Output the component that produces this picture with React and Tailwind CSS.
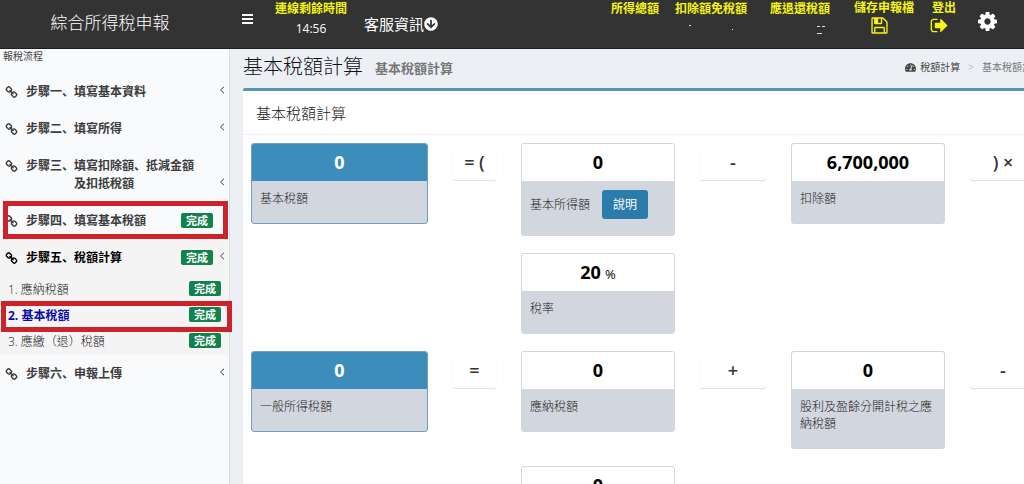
import React from "react";
import { FaArrowCircleDown, FaTachometerAlt } from "react-icons/fa";

function Glyph({ d, box = "0 0 1792 1792", className }) {
  return (
    <svg viewBox={box} className={className} fill="currentColor" aria-hidden="true">
      <path d={d} />
    </svg>
  );
}

const LINK =
  "M1520 1216q0-40-28-68l-208-208q-28-28-68-28-42 0-72 32 3 3 19 18.500t21.500 21.500 15 19 13 25.500 3.500 27.500q0 40-28 68t-68 28q-15 0-27.500-3.500t-25.500-13-19-15-21.500-21.500-18.500-19q-33 31-33 73 0 40 28 68l206 207q27 27 68 27 40 0 68-26l147-146q28-28 28-67zm-703-705q0-40-28-68l-206-207q-28-28-68-28-39 0-68 27l-147 146q-28 28-28 67 0 40 28 68l208 208q27 27 68 27 42 0 72-31-3-3-19-18.500t-21.500-21.500-15-19-13-25.500-3.500-27.500q0-40 28-68t68-28q15 0 27.500 3.500t25.500 13 19 15 21.500 21.500 18.500 19q33-31 33-73zm895 705q0 120-85 203l-147 146q-83 83-203 83-121 0-204-85l-206-207q-83-83-83-203 0-123 88-209l-88-88q-86 88-208 88-120 0-204-84l-208-208q-84-84-84-204t85-203l147-146q83-83 203-83 121 0 204 85l206 207q83 83 83 203 0 123-88 209l88 88q86-88 208-88 120 0 204 84l208 208q84 84 84 204z";
const SAVE =
  "M512 1536h768v-384h-768v384zm896 0h128v-896q0-14-10-38.500t-20-34.500l-281-281q-10-10-34-20t-39-10v416q0 40-28 68t-68 28h-576q-40 0-68-28t-28-68v-416h-128v1280h128v-416q0-40 28-68t68-28h832q40 0 68 28t28 68v416zm-384-928v-320q0-13-9.500-22.500t-22.500-9.500h-192q-13 0-22.500 9.500t-9.500 22.500v320q0 13 9.500 22.500t22.500 9.500h192q13 0 22.500-9.500t9.500-22.500zm640 32v928q0 40-28 68t-68 28h-1344q-40 0-68-28t-28-68v-1344q0-40 28-68t68-28h928q40 0 88 20t76 48l280 280q28 28 48 76t20 88z";
const SIGN_OUT =
  "M704 1440q0 4 1 20t.5 26.500-3 23.500-10 19.500-20.500 6.500h-320q-119 0-203.500-84.500t-84.500-203.500v-704q0-119 84.500-203.500t203.500-84.500h320q13 0 22.500 9.500t9.500 22.500q0 4 1 20t.5 26.500-3 23.500-10 19.500-20.500 6.500h-320q-66 0-113 47t-47 113v704q0 66 47 113t113 47h312l11.500 1 11.500 3 8 5.500 7 9 2 13.500zm928-544q0 26-19 45l-544 544q-19 19-45 19t-45-19-19-45v-288h-448q-26 0-45-19t-19-45v-384q0-26 19-45t45-19h448v-288q0-26 19-45t45-19 45 19l544 544q19 19 19 45z";
const COG =
  "M1024 896q0-106-75-181t-181-75-181 75-75 181 75 181 181 75 181-75 75-181zm512-109v222q0 12-8 23t-20 13l-185 28q-19 54-39 91 35 50 107 138 10 12 10 25t-9 23q-27 37-99 108t-94 71q-12 0-26-9l-138-108q-44 23-91 38-16 136-29 186-7 28-36 28h-222q-14 0-24.500-8.500t-11.500-21.500l-28-184q-49-16-90-37l-141 107q-10 9-25 9-14 0-25-11-126-114-165-168-7-10-7-23 0-12 8-23 15-21 51-66.500t54-70.500q-27-50-41-99l-183-27q-13-2-21-12.500t-8-23.500v-222q0-12 8-23t19-13l186-28q14-46 39-92-40-57-107-138-10-12-10-24 0-10 9-23 26-36 98.500-107.500t94.500-71.500q13 0 26 10l138 107q44-23 91-38 16-136 29-186 7-28 36-28h222q14 0 24.500 8.500t11.500 21.500l28 184q49 16 90 37l142-107q9-9 24-9 13 0 25 10 129 119 165 170 7 8 7 22 0 12-8 23-15 21-51 66.500t-54 70.500q26 50 41 98l183 28q13 2 21 12.500t8 23.500z";

function Stat({ label, marks }) {
  return (
    <div className="flex flex-col">
      <span>{label}</span>
      <svg viewBox="0 0 60 20" className="h-5 w-[60px]" fill="#e5e5e5" aria-hidden="true">
        {marks.map(([x, y, w]) => (
          <rect key={x + "-" + y} x={x} y={y} width={w} height="1" />
        ))}
      </svg>
    </div>
  );
}

function Header() {
  return (
    <header className="flex h-[49px] shrink-0 border-b border-[#1e1e1e] bg-[#333333] text-white">
      <div className="flex w-[220px] shrink-0 items-center justify-center pb-[2px] text-[17px] font-light">
        綜合所得稅申報
      </div>
      <button type="button" aria-label="選單" className="ml-[22px] mt-[13px] h-[11px] w-[11px]">
        <svg viewBox="0 0 11 11" className="size-[11px]" fill="currentColor" aria-hidden="true">
          <path d="M0 1h11v2H0zM0 5h11v2H0zM0 9h11v2H0z" />
        </svg>
      </button>
      <div className="ml-[22px] flex flex-col items-center text-xs whitespace-nowrap">
        <span className="h-[18px] leading-[18px] font-bold text-[#f5f510]">連線剩餘時間</span>
        <span className="leading-[22px] font-medium">14:56</span>
      </div>
      <button type="button" className="ml-[17px] flex h-12 items-center text-[15px] whitespace-nowrap">
        客服資訊
        <FaArrowCircleDown className="size-[14px]" />
      </button>
      <div className="ml-auto flex pr-[27px] text-xs leading-[18px] font-bold whitespace-nowrap text-[#f5f510]">
        <Stat label="所得總額" marks={[]} />
        <div className="ml-1 flex gap-[23px]">
          <Stat label="扣除額免稅額" marks={[[14, 7, 2], [57, 11, 1]]} />
          <Stat label="應退還稅額" marks={[[47, 8, 3], [52, 8, 3], [47, 15, 5]]} />
        </div>
        <button type="button" className="ml-6 flex flex-col items-start">
          <span className="leading-4">儲存申報檔</span>
          <Glyph d={SAVE} className="ml-4 size-[19px]" />
        </button>
        <button type="button" className="ml-4 flex flex-col items-start">
          <span className="pl-[2px] leading-4">登出</span>
          <Glyph d={SIGN_OUT} className="size-[19px]" />
        </button>
        <button type="button" aria-label="設定" className="ml-[22px] flex h-[42px] items-center text-white">
          <Glyph d={COG} box="0 128 1536 1536" className="size-[19px]" />
        </button>
      </div>
    </header>
  );
}

function Done() {
  return (
    <span className="rounded-[2px] bg-[#12824c] px-[5px] text-[11px] leading-[15px] font-bold text-white">
      完成
    </span>
  );
}

function Chevron() {
  return (
    <svg viewBox="0 0 6 8" className="h-2 w-[6px]" fill="none" stroke="#444" aria-hidden="true">
      <path d="M5 .8 1.500 4 5 7.200" />
    </svg>
  );
}

/* Enumeration comma set low and to the left in its cell. */
function Comma() {
  return <span className="font-['Noto_Sans_CJK_JP',sans-serif] leading-none">、</span>;
}

function Step({ children, done, arrow, active, highlight }) {
  return (
    <a
      href="#"
      className={
        "relative flex items-start pt-[10px] pr-1 pb-[9px] pl-[5px] text-xs leading-[18px] font-bold " +
        (active ? "bg-[#f4f4f5] text-black" : "text-[#3c3c3c]")
      }
    >
      <Glyph d={LINK} className="mt-[3px] mr-2 size-[13px] shrink-0" />
      <span>{children}</span>
      <span className="ml-auto flex items-end self-stretch">
        {done && (
          <span className={"flex h-[18px] items-center pb-[2px] " + (arrow ? "mr-[6px]" : "mr-3")}>
            <Done />
          </span>
        )}
        {arrow && (
          <span className="flex h-[18px] items-center pb-1">
            <Chevron />
          </span>
        )}
      </span>
      {highlight && (
        <span className="pointer-events-none absolute -top-px right-px bottom-0 left-[3px] z-10 border-[5px] border-[#cc2229]" />
      )}
    </a>
  );
}

function SubStep({ label, current }) {
  return (
    <a
      href="#"
      className={
        "relative flex h-[26px] items-center pr-2 pl-2 text-xs " +
        (current ? "font-bold text-[#0a0aa5]" : "font-light text-[#222]")
      }
    >
      {label}
      <span className="ml-auto flex h-6 items-center pb-1">
        <Done />
      </span>
      {current && (
        <span className="pointer-events-none absolute -top-[2px] -right-[3px] -bottom-[3px] left-px z-10 border-[5px] border-[#cc2229]" />
      )}
    </a>
  );
}

function Sidebar() {
  return (
    <nav className="relative z-10 w-[230px] shrink-0 border-r border-[#d8dce4] bg-[#f9fafc]">
      <div className="h-6 pl-[3px] text-[10px] leading-[14px] text-[#444]">報稅流程</div>
      <Step arrow>步驟一<Comma />填寫基本資料</Step>
      <Step arrow>步驟二<Comma />填寫所得</Step>
      <Step arrow>
        步驟三<Comma />填寫扣除額<Comma />抵減金額
        <span className="block pl-12">及扣抵稅額</span>
      </Step>
      <Step done highlight>步驟四<Comma />填寫基本稅額</Step>
      <Step done arrow active>步驟五<Comma />稅額計算</Step>
      <div className="bg-[#f4f4f5] pt-px">
        <SubStep label="1. 應納稅額" />
        <SubStep label="2. 基本稅額" current />
        <SubStep label="3. 應繳（退）稅額" />
      </div>
      <Step arrow>步驟六<Comma />申報上傳</Step>
    </nav>
  );
}

function Card({ value, unit, label, primary, action, className = "" }) {
  return (
    <section
      className={
        "self-start overflow-hidden rounded-[3px] border bg-[#d2d6de] " +
        (primary ? "border-[#6f9fba] " : "border-[#d2d6de] ") +
        className
      }
    >
      <div
        className={
          "flex h-[37px] items-center justify-center gap-1 pb-px text-lg font-bold " +
          (primary ? "bg-[#3c8dbc] text-white" : "bg-white text-black")
        }
      >
        {value}
        {unit && <span className="pt-1 text-[13px] font-normal">{unit}</span>}
      </div>
      <div className="flex items-center gap-3 px-2 pt-[9px] pb-4 text-xs leading-[17px] font-light text-[#1c1c1c]">
        {label}
        {action && (
          <button type="button" className="h-[29px] rounded-[3px] bg-[#2a7cab] px-[11px] font-normal text-white">
            {action}
          </button>
        )}
      </div>
    </section>
  );
}

function Op({ children }) {
  return (
    <div className="flex h-[37px] items-center justify-center self-start rounded-[2px] text-lg font-semibold whitespace-pre text-[#333] shadow-[0_1px_1px_rgba(0,0,0,0.12)]">
      {children}
    </div>
  );
}

function Content() {
  return (
    <main className="min-w-0 flex-1 overflow-auto bg-[#ecf0f5] pl-[13px] [scrollbar-width:none]">
      <div className="min-w-[801px]">
        <div className="flex h-[39px] items-start whitespace-nowrap">
          <h1 className="text-xl leading-9 font-light text-[#111]">基本稅額計算</h1>
          <span className="ml-3 text-[13px] leading-[38px] font-bold text-[#777]">基本稅額計算</span>
          <nav className="mr-[2px] ml-auto flex h-9 items-center text-[10px] text-[#444]">
            <FaTachometerAlt className="mr-1 size-[11px]" />
            <a href="#">稅額計算</a>
            <span className="mx-2 text-[#bbb]">&gt;</span>
            <span className="text-[#777]">基本稅額計算</span>
          </nav>
        </div>
        <div className="rounded-t-[2px] border-t-[3px] border-[#5596b8] bg-white pb-5">
          <h2 className="h-11 border-b border-[#f1f1f1] pl-[13px] text-[15px] leading-[44px] font-light text-[#222]">
            基本稅額計算
          </h2>
          <div className="grid grid-cols-[177px_43px_154px_66px_154px_66px] gap-x-[25px] gap-y-[17px] px-2 pt-2">
            <Card primary value="0" label="基本稅額" />
            <Op>= (</Op>
            <Card value="0" label="基本所得額" action="說明" />
            <Op>-</Op>
            <Card value="6,700,000" label="扣除額" />
            <Op>) ×</Op>
            <Card value="20" unit="%" label="稅率" className="col-start-3" />
            <Card primary value="0" label="一般所得稅額" className="col-start-1" />
            <Op>=</Op>
            <Card value="0" label="應納稅額" />
            <Op>+</Op>
            <Card value="0" label="股利及盈餘分開計稅之應納稅額" />
            <Op>-</Op>
            <Card value="0" label="" className="col-start-3" />
          </div>
        </div>
      </div>
    </main>
  );
}

export default function App() {
  return (
    <div className="flex h-screen flex-col overflow-hidden bg-[#f9fafc] font-['Open_Sans','Noto_Sans_CJK_TC',sans-serif]">
      <Header />
      <div className="flex min-h-0 flex-1">
        <Sidebar />
        <Content />
      </div>
    </div>
  );
}
